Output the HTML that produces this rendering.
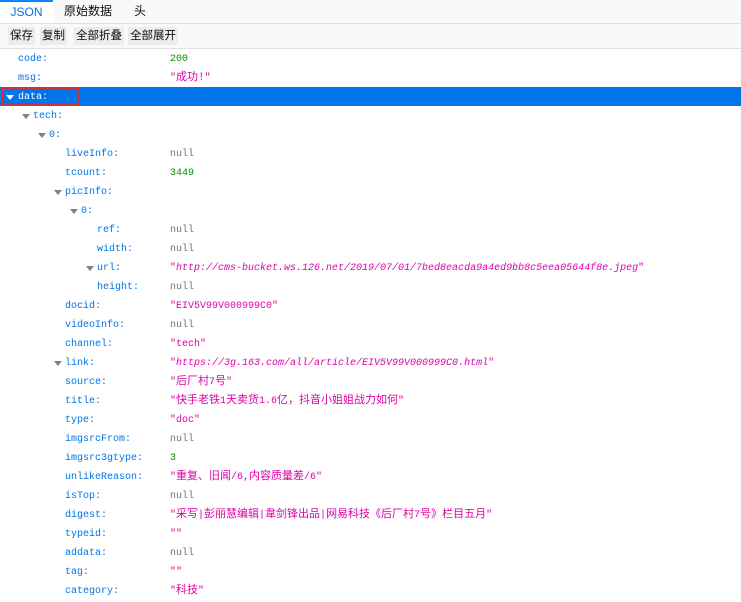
<!DOCTYPE html>
<html><head><meta charset="utf-8"><style>
*{margin:0;padding:0;box-sizing:border-box}
body{width:741px;height:593px;overflow:hidden;background:#fff;font-family:"Liberation Sans","Noto Sans CJK SC",sans-serif;position:relative}
.tabs{position:absolute;left:0;top:0;width:741px;height:24px;background:#f9f9fa;border-bottom:1px solid #e0e0e2}
.tab{position:absolute;top:0;height:23px;line-height:23px;font-size:12px;color:#0c0c0d}
.tab.sel{background:#fff;color:#0074e8;border-top:2px solid #0a84ff;line-height:20px;left:0;width:53px;text-align:center}
.tb{position:absolute;left:0;top:24px;width:741px;height:25px;background:#f9f9fa;border-bottom:1px solid #e0e0e2}
.btn{position:absolute;top:3px;height:18px;line-height:18px;font-size:11.5px;color:#0c0c0d;background:#ececec;padding:0 2px}
.row{position:absolute;left:0;width:741px;height:19px;line-height:21px;font-family:"Liberation Mono","Noto Sans CJK SC",monospace;font-size:10px;white-space:pre}
.k{position:absolute;color:#0074e8}
.v{position:absolute;left:170px}
.c{font-size:11px}
.n{color:#058b00}.s{color:#dd00a9}.z{color:#737373}.i{font-style:italic}
.tw{position:absolute;top:8px;width:0;height:0;border-left:4px solid transparent;border-right:4px solid transparent;border-top:5px solid #808080}
.hl{background:#0074e8}
.hl .k{color:#fff}
.hl .tw{border-top-color:#fff}
</style></head><body>
<div class="tabs">
<div class="tab sel">JSON</div>
<div class="tab" style="left:64px">原始数据</div>
<div class="tab" style="left:134px">头</div>
</div>
<div class="tb">
<div class="btn" style="left:8px">保存</div>
<div class="btn" style="left:40px">复制</div>
<div class="btn" style="left:74px">全部折叠</div>
<div class="btn" style="left:128px">全部展开</div>
</div>

<div class="row" style="top:49px"><span class="k" style="left:18px">code:</span><span class="v n">200</span></div>
<div class="row" style="top:68px"><span class="k" style="left:18px">msg:</span><span class="v s">"<span class="c">成功!</span>"</span></div>
<div class="row hl" style="top:87px"><div style="position:absolute;left:1px;top:1px;width:78px;height:17px;border:2px solid #d0303a"></div><span class="tw" style="left:6px"></span><span class="k" style="left:18px">data:</span></div>
<div class="row" style="top:106px"><span class="tw" style="left:22px"></span><span class="k" style="left:33px">tech:</span></div>
<div class="row" style="top:125px"><span class="tw" style="left:38px"></span><span class="k" style="left:49px">0:</span></div>
<div class="row" style="top:144px"><span class="k" style="left:65px">liveInfo:</span><span class="v z">null</span></div>
<div class="row" style="top:163px"><span class="k" style="left:65px">tcount:</span><span class="v n">3449</span></div>
<div class="row" style="top:182px"><span class="tw" style="left:54px"></span><span class="k" style="left:65px">picInfo:</span></div>
<div class="row" style="top:201px"><span class="tw" style="left:70px"></span><span class="k" style="left:81px">0:</span></div>
<div class="row" style="top:220px"><span class="k" style="left:97px">ref:</span><span class="v z">null</span></div>
<div class="row" style="top:239px"><span class="k" style="left:97px">width:</span><span class="v z">null</span></div>
<div class="row" style="top:258px"><span class="tw" style="left:86px"></span><span class="k" style="left:97px">url:</span><span class="v s">"<i>http://cms-bucket.ws.126.net/2019/07/01/7bed8eacda9a4ed9bb8c5eea05644f8e.jpeg</i>"</span></div>
<div class="row" style="top:277px"><span class="k" style="left:97px">height:</span><span class="v z">null</span></div>
<div class="row" style="top:296px"><span class="k" style="left:65px">docid:</span><span class="v s">"EIV5V99V000999C0"</span></div>
<div class="row" style="top:315px"><span class="k" style="left:65px">videoInfo:</span><span class="v z">null</span></div>
<div class="row" style="top:334px"><span class="k" style="left:65px">channel:</span><span class="v s">"tech"</span></div>
<div class="row" style="top:353px"><span class="tw" style="left:54px"></span><span class="k" style="left:65px">link:</span><span class="v s">"<i>https://3g.163.com/all/article/EIV5V99V000999C0.html</i>"</span></div>
<div class="row" style="top:372px"><span class="k" style="left:65px">source:</span><span class="v s">"<span class="c">后厂村</span>7<span class="c">号</span>"</span></div>
<div class="row" style="top:391px"><span class="k" style="left:65px">title:</span><span class="v s">"<span class="c">快手老铁</span>1<span class="c">天卖货</span>1.6<span class="c">亿，抖音小姐姐战力如何</span>"</span></div>
<div class="row" style="top:410px"><span class="k" style="left:65px">type:</span><span class="v s">"doc"</span></div>
<div class="row" style="top:429px"><span class="k" style="left:65px">imgsrcFrom:</span><span class="v z">null</span></div>
<div class="row" style="top:448px"><span class="k" style="left:65px">imgsrc3gtype:</span><span class="v n">3</span></div>
<div class="row" style="top:467px"><span class="k" style="left:65px">unlikeReason:</span><span class="v s">"<span class="c">重复、旧闻</span>/6,<span class="c">内容质量差</span>/6"</span></div>
<div class="row" style="top:486px"><span class="k" style="left:65px">isTop:</span><span class="v z">null</span></div>
<div class="row" style="top:505px"><span class="k" style="left:65px">digest:</span><span class="v s">"<span class="c">采写</span>|<span class="c">彭丽慧编辑</span>|<span class="c">韋剑锋出品</span>|<span class="c">网易科技《后厂村</span>7<span class="c">号》栏目五月</span>"</span></div>
<div class="row" style="top:524px"><span class="k" style="left:65px">typeid:</span><span class="v s">""</span></div>
<div class="row" style="top:543px"><span class="k" style="left:65px">addata:</span><span class="v z">null</span></div>
<div class="row" style="top:562px"><span class="k" style="left:65px">tag:</span><span class="v s">""</span></div>
<div class="row" style="top:581px"><span class="k" style="left:65px">category:</span><span class="v s">"<span class="c">科技</span>"</span></div>
</body></html>
